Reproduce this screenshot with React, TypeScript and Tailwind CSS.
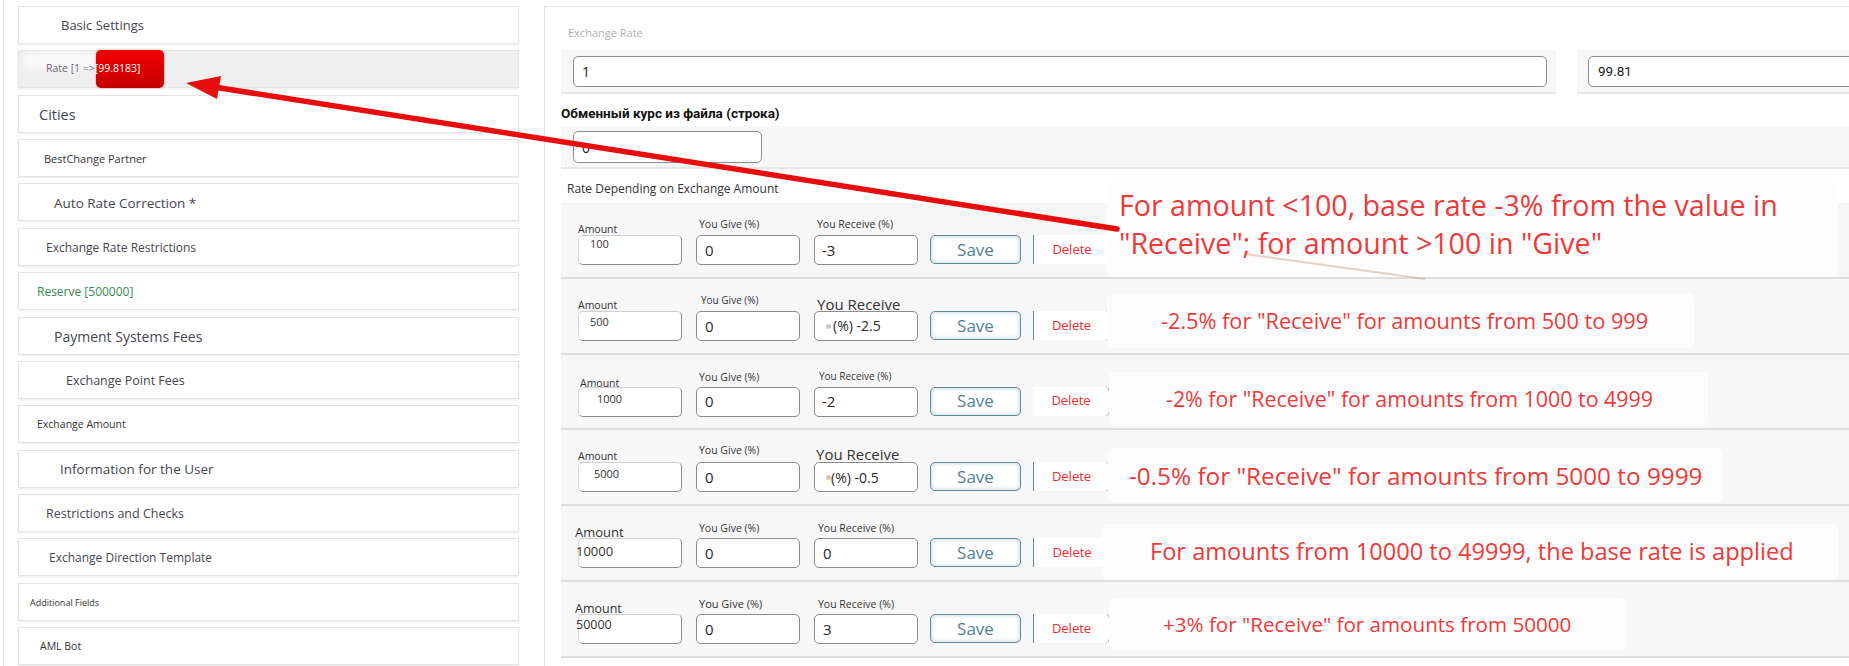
import React from 'react'

type SideItem = { label: string; cls: string }

// левое меню настроек направления обмена
const sideItems: SideItem[] = [
  { label: 'Basic Settings', cls: 'pl-[42px] text-[13px] text-[#46464f]' },
  { label: 'RATE', cls: '' },
  { label: 'Cities', cls: 'pl-[20px] text-[14.5px] text-[#46464f]' },
  { label: 'BestChange Partner', cls: 'pl-[25px] text-[11px] text-[#333]' },
  { label: 'Auto Rate Correction *', cls: 'pl-[35px] text-[13.5px] text-[#46464f]' },
  { label: 'Exchange Rate Restrictions', cls: 'pl-[27px] text-[12px] text-[#46464f]' },
  { label: 'Reserve [500000]', cls: 'pl-[18px] text-[12px] text-[#3b8a50]' },
  { label: 'Payment Systems Fees', cls: 'pl-[35px] text-[14px] text-[#46464f]' },
  { label: 'Exchange Point Fees', cls: 'pl-[47px] text-[12.5px] text-[#46464f]' },
  { label: 'Exchange Amount', cls: 'pl-[18px] text-[10.5px] text-[#333]' },
  { label: 'Information for the User', cls: 'pl-[41px] text-[13.5px] text-[#46464f]' },
  { label: 'Restrictions and Checks', cls: 'pl-[27px] text-[12.5px] text-[#46464f]' },
  { label: 'Exchange Direction Template', cls: 'pl-[30px] text-[12px] text-[#46464f]' },
  { label: 'Additional Fields', cls: 'pl-[11px] text-[9px] text-[#333]' },
  { label: 'AML Bot', cls: 'pl-[21px] text-[10.5px] text-[#333]' },
]

type Row = {
  amount: string
  amountLabelCls: string
  amountValCls: string
  giveLabelCls: string
  recvLabel: string
  recvLabelCls: string
  recv: string
  recvCls: string
  delCls: string
  note: string[]
  noteBox: string
  noteText: string
}

const rows: Row[] = [
  {
    amount: '100',
    amountLabelCls: 'mb-[-1px] text-[10.5px] leading-[13px]',
    amountValCls: 'pl-[11px] pt-[1px] text-[11px]',
    giveLabelCls: 'mb-[4px] pl-[3px] text-[10.5px] leading-[13px]',
    recvLabel: 'You Receive (%)',
    recvLabelCls: 'mb-[4px] pl-[3px] text-[10.5px] leading-[13px]',
    recv: '-3',
    recvCls: 'pl-[7px] text-[15px]',
    delCls: 'border-l',
    note: ['For amount <100, base rate -3% from the value in', '"Receive"; for amount >100 in "Give"'],
    noteBox: 'top-[-22px] left-[546px] h-[96px] w-[731px] pt-[5px] pl-[12px]',
    noteText: 'text-[28.6px] leading-[38px]',
  },
  {
    amount: '500',
    amountLabelCls: 'mb-[-1px] text-[10.5px] leading-[13px]',
    amountValCls: 'pl-[11px] pt-[3px] text-[11px]',
    giveLabelCls: 'mb-[5px] pl-[5px] text-[10px] leading-[12px]',
    recvLabel: 'You Receive',
    recvLabelCls: 'mb-[-2px] pl-[3px] text-[15px] leading-[18px]',
    recv: '(%) -2.5',
    recvCls: 'pl-[18px] text-[14px]',
    delCls: 'border-x',
    note: ['-2.5% for "Receive" for amounts from 500 to 999'],
    noteBox: 'top-[15px] left-[546px] h-[54px] w-[588px] pl-[54px]',
    noteText: 'text-[21.7px] leading-[54px]',
  },
  {
    amount: '1000',
    amountLabelCls: 'mb-[-3px] text-[10.5px] leading-[13px] pl-[2px]',
    amountValCls: 'pl-[18px] pt-[4px] text-[11px]',
    giveLabelCls: 'mb-[3px] pl-[3px] text-[10.5px] leading-[13px]',
    recvLabel: 'You Receive (%)',
    recvLabelCls: 'mb-[4px] pl-[5px] text-[10px] leading-[13px]',
    recv: '-2',
    recvCls: 'pl-[7px] text-[15px]',
    delCls: 'border-r',
    note: ['-2% for "Receive" for amounts from 1000 to 4999'],
    noteBox: 'top-[17px] left-[548px] h-[54px] w-[599px] pl-[57px]',
    noteText: 'text-[21.4px] leading-[54px]',
  },
  {
    amount: '5000',
    amountLabelCls: 'mb-[-1px] text-[10.5px] leading-[13px]',
    amountValCls: 'pl-[15px] pt-[4px] text-[11px]',
    giveLabelCls: 'mb-[5px] pl-[3px] text-[10.5px] leading-[13px]',
    recvLabel: 'You Receive',
    recvLabelCls: 'mb-[-1px] pl-[2px] text-[15px] leading-[18px]',
    recv: '(%) -0.5',
    recvCls: 'pl-[16px] text-[14px]',
    delCls: 'border-x',
    note: ['-0.5% for "Receive" for amounts from 5000 to 9999'],
    noteBox: 'top-[18px] left-[547px] h-[55px] w-[614px] pl-[21px]',
    noteText: 'text-[24.3px] leading-[55px]',
  },
  {
    amount: '10000',
    amountLabelCls: 'mb-[-2px] ml-[-3px] text-[13px] leading-[15px]',
    amountValCls: 'ml-[-3px] pt-[5px] text-[13px]',
    giveLabelCls: 'mb-[3px] pl-[3px] text-[10.5px] leading-[13px]',
    recvLabel: 'You Receive (%)',
    recvLabelCls: 'mb-[3px] pl-[4px] text-[10.5px] leading-[13px]',
    recv: '0',
    recvCls: 'pl-[8px] text-[15px]',
    delCls: 'border-l',
    note: ['For amounts from 10000 to 49999, the base rate is applied'],
    noteBox: 'top-[18px] left-[541px] h-[55px] w-[737px] pl-[48px]',
    noteText: 'text-[23.6px] leading-[55px]',
  },
  {
    amount: '50000',
    amountLabelCls: 'mb-[-2px] ml-[-3px] text-[12.5px] leading-[15px]',
    amountValCls: 'ml-[-3px] pt-[3px] text-[12.5px]',
    giveLabelCls: 'mb-[3px] pl-[3px] text-[11px] leading-[14px]',
    recvLabel: 'You Receive (%)',
    recvLabelCls: 'mb-[3px] pl-[4px] text-[10.5px] leading-[14px]',
    recv: '3',
    recvCls: 'pl-[8px] text-[15px]',
    delCls: 'border-x',
    note: ['+3% for "Receive" for amounts from 50000'],
    noteBox: 'top-[16px] left-[548px] h-[53px] w-[518px] pl-[54px]',
    noteText: 'text-[20.6px] leading-[53px]',
  },
]

function SideCard({ item }: { item: SideItem }) {
  if (item.label === 'RATE') {
    return (
      <div className="relative flex h-[38px] shrink-0 items-center border border-[#e4e4e4] bg-[#efefef] pl-[27px] text-[10.5px] text-[#6a6a78] shadow-[0_1px_2px_rgba(0,0,0,0.08)]">
        <div className="absolute left-[4px] top-[2px] h-[16px] w-[72px] rounded-full bg-white/70 blur-[3px]" />
        <div className="absolute left-[77px] top-[-1px] h-[38px] w-[68px] rounded-[5px] bg-[linear-gradient(180deg,#f00000,#d80000_60%,#c40000)] shadow-[0_0_2px_rgba(200,0,0,0.6)]" />
        <span className="relative">Rate [1 =&gt; </span>
        <span className="relative text-white">[99.8183]</span>
      </div>
    )
  }
  return (
    <div
      className={`flex h-[38px] shrink-0 items-center border border-[#e4e4e4] bg-white pt-[2px] shadow-[0_1px_2px_rgba(0,0,0,0.08)] ${item.cls}`}
    >
      {item.label}
    </div>
  )
}

function RateRow({ r }: { r: Row }) {
  return (
    <div className="relative flex h-[75.8px] shrink-0 items-end border-b-2 border-[#dedede] bg-[#f7f7f7] pb-[11.8px] pl-[17px] text-[#333]">
      <div className="flex w-[104px] flex-col">
        <span className={r.amountLabelCls}>Amount</span>
        <div className="h-[30px] rounded-[5px] border border-[#8c8c8c] border-l-[#d8d8d8] border-t-[#cfcfcf] bg-white">
          <div className={`leading-[14px] text-[#333] ${r.amountValCls}`}>{r.amount}</div>
        </div>
      </div>
      <div className="ml-[14px] flex w-[104px] flex-col">
        <span className={r.giveLabelCls}>You Give (%)</span>
        <div className="flex h-[30px] items-center rounded-[5px] border border-[#8c8c8c] bg-white pl-[8px] text-[15px] text-[#2a2a2a]">
          0
        </div>
      </div>
      <div className="ml-[14px] flex w-[104px] flex-col">
        <span className={r.recvLabelCls}>{r.recvLabel}</span>
        <div className={`relative flex h-[30px] items-center rounded-[5px] border border-[#8c8c8c] bg-white text-[#2a2a2a] ${r.recvCls}`}>
          {r.recv.startsWith('(') && (
            <span className="absolute left-[11px] top-[12px] h-[5px] w-[5px] rounded-full bg-[#c8c8c8]" />
          )}
          {r.recv}
        </div>
      </div>
      <div className="mb-[1px] ml-[12px] flex h-[29px] w-[91px] items-center justify-center rounded-[5px] border border-[#5b8c9a] bg-white text-[17px] text-[#4f8298] shadow-[inset_0_0_5px_rgba(80,130,150,0.35)]">
        Save
      </div>
      <div
        className={`mb-[1px] ml-[12px] flex h-[29px] w-[77px] items-center justify-center rounded-r-[5px] border-[#5b8c9a] bg-white text-[13px] text-[#f0282d] ${r.delCls}`}
      >
        Delete
      </div>
      <div className={`absolute rounded-[6px] bg-[#fdfdfd] text-[#ee3a3a] ${r.noteBox}`}>
        {r.note.map((line) => (
          <div key={line} className={`whitespace-nowrap ${r.noteText}`}>
            {line}
          </div>
        ))}
      </div>
    </div>
  )
}

export default function App() {
  return (
    <div className="relative h-[666px] w-[1849px] overflow-hidden bg-white font-['Open_Sans',sans-serif]">
      <div className="flex h-full">
        <aside className="ml-[3px] flex w-[541px] shrink-0 flex-col gap-[6.36px] border-l border-[#e2e2e2] pl-[14px] pt-[6px]">
          {sideItems.map((item) => (
            <div key={item.label} className="w-[501px]">
              <SideCard item={item} />
            </div>
          ))}
        </aside>

        <main className="relative mt-[6px] min-w-0 flex-1 border-l border-t border-[#e2e2e2] pl-[16px]">
          <div className="pl-[7px] pt-[18px] text-[11px] leading-[15px] text-[#b0b0b0]">Exchange Rate</div>

          <div className="mt-[10px] grid grid-cols-[995px_1fr] gap-x-[21px]">
            <div className="h-[44px] border-b-2 border-[#e6e6e6] bg-[#f7f7f7] pl-[12px] pt-[6px]">
              <div className="flex h-[31px] w-[974px] items-center rounded-[5px] border border-[#8c8c8c] bg-white pl-[8px] text-[14px] text-[#222]">
                1
              </div>
            </div>
            <div className="h-[44px] border-b-2 border-[#e6e6e6] bg-[#f7f7f7] pl-[11px] pt-[6px]">
              <div className="flex h-[31px] w-[400px] items-center rounded-[5px] border border-[#8c8c8c] bg-white pl-[9px] font-['Roboto',sans-serif] text-[13.5px] text-[#222]">
                99.81
              </div>
            </div>
          </div>

          <div className="mt-[10px] font-['Roboto',sans-serif] text-[13.5px] leading-[18px] font-bold text-[#111]">
            Обменный курс из файла (строка)
          </div>
          <div className="mt-[4px] h-[43px] border-b-2 border-[#e6e6e6] bg-[#f7f7f7] pl-[12px] pt-[5px]">
            <div className="flex h-[32px] w-[189px] items-center rounded-[5px] border border-[#8c8c8c] bg-white pl-[8px] text-[14px] text-[#222]">
              0
            </div>
          </div>

          <div className="mt-[12px] pl-[6px] text-[12px] leading-[16px] text-[#333]">Rate Depending on Exchange Amount</div>

          <div className="mt-[6px] flex flex-col">
            {rows.map((r) => (
              <RateRow key={r.amount} r={r} />
            ))}
          </div>
        </main>
      </div>

      {/* красная стрелка-аннотация поверх скриншота */}
      <svg className="pointer-events-none absolute inset-0" width="1849" height="666" viewBox="0 0 1849 666">
        <line x1="1117" y1="229" x2="214" y2="87" stroke="#e80c0c" strokeWidth="5.5" strokeLinecap="round" />
        <polygon points="186,83 221,76 217,99" fill="#e80c0c" />
        <line x1="1245" y1="254" x2="1425" y2="279" stroke="#c89a7a" strokeOpacity="0.45" strokeWidth="2" />
      </svg>
    </div>
  )
}
